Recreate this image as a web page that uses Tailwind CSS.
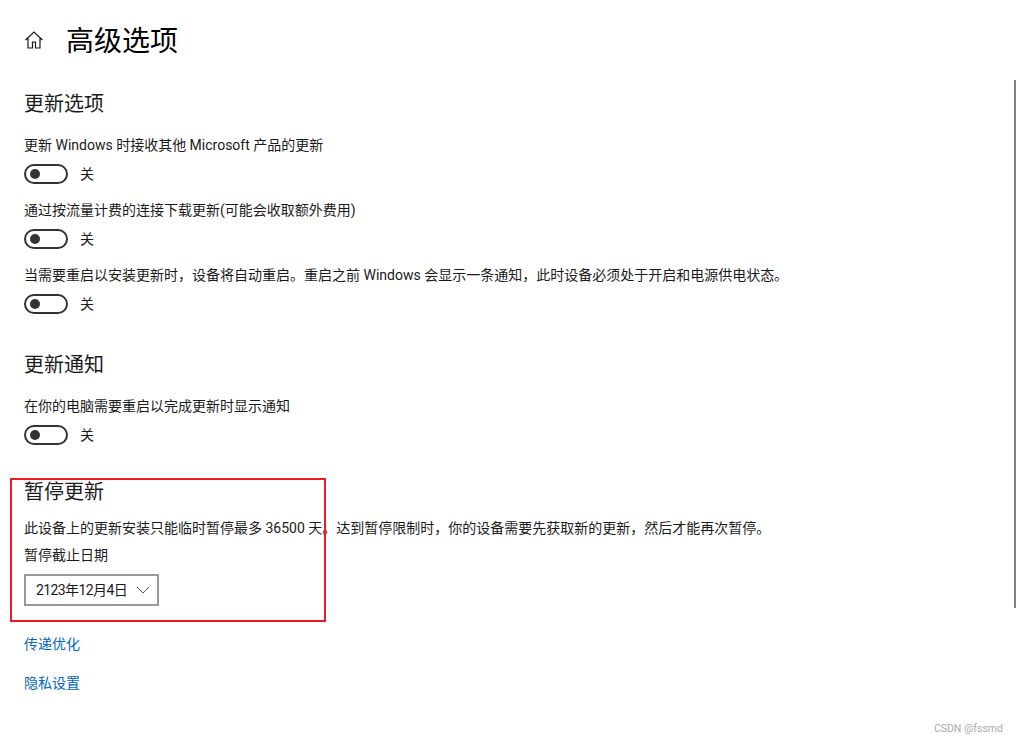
<!DOCTYPE html>
<html lang="zh-CN">
<head>
    <meta charset="UTF-8">
    <title>高级选项</title>
    <script src="https://cdn.jsdelivr.net/npm/@tailwindcss/browser@4"></script>
</head>
<body class="bg-white relative h-[742px] w-[1018px] overflow-hidden text-[14px] text-[#1a1a1a] font-['Roboto','Noto_Sans_CJK_SC',sans-serif]">
    <!-- Header -->
    <div class="flex items-center pl-[24px] pt-[20px] h-[60px]">
        <svg class="w-[20px] h-[20px]" viewBox="0 0 20 20" fill="none" stroke="#1a1a1a" stroke-width="1.2">
            <path d="M1.500 10 10 2l8.500 8M4 8v10h4.500v-6h3v6H16V8"/>
        </svg>
        <h1 class="ml-[22px] pt-[4px] text-[28px] leading-[40px] font-normal text-black">高级选项</h1>
    </div>

    <div class="pl-[24px]">
        <!-- Update options -->
        <h2 class="mt-[30px] text-[20px] leading-[28px] font-normal">更新选项</h2>
        <p class="mt-[17px] leading-[20px]">更新 Windows 时接收其他 Microsoft 产品的更新</p>
        <div class="flex items-center mt-[9px] h-[20px]">
            <span class="flex items-center w-[44px] h-[20px] rounded-full border-2 border-[#333] pl-[4px]"><span class="w-[10px] h-[10px] rounded-full bg-[#333]"></span></span>
            <span class="ml-[12px]">关</span>
        </div>
        <p class="mt-[16px] leading-[20px]">通过按流量计费的连接下载更新(可能会收取额外费用)</p>
        <div class="flex items-center mt-[9px] h-[20px]">
            <span class="flex items-center w-[44px] h-[20px] rounded-full border-2 border-[#333] pl-[4px]"><span class="w-[10px] h-[10px] rounded-full bg-[#333]"></span></span>
            <span class="ml-[12px]">关</span>
        </div>
        <p class="mt-[16px] leading-[20px]">当需要重启以安装更新时，设备将自动重启。重启之前 Windows 会显示一条通知，此时设备必须处于开启和电源供电状态。</p>
        <div class="flex items-center mt-[9px] h-[20px]">
            <span class="flex items-center w-[44px] h-[20px] rounded-full border-2 border-[#333] pl-[4px]"><span class="w-[10px] h-[10px] rounded-full bg-[#333]"></span></span>
            <span class="ml-[12px]">关</span>
        </div>

        <!-- Update notifications -->
        <h2 class="mt-[37px] text-[20px] leading-[28px] font-normal">更新通知</h2>
        <p class="mt-[17px] leading-[20px]">在你的电脑需要重启以完成更新时显示通知</p>
        <div class="flex items-center mt-[9px] h-[20px]">
            <span class="flex items-center w-[44px] h-[20px] rounded-full border-2 border-[#333] pl-[4px]"><span class="w-[10px] h-[10px] rounded-full bg-[#333]"></span></span>
            <span class="ml-[12px]">关</span>
        </div>

        <!-- Pause updates -->
        <h2 class="mt-[33px] text-[20px] leading-[28px] font-normal">暂停更新</h2>
        <p class="mt-[12px] leading-[20px]">此设备上的更新安装只能临时暂停最多 36500 天。达到暂停限制时，你的设备需要先获取新的更新，然后才能再次暂停。</p>
        <p class="mt-[7px] leading-[20px]">暂停截止日期</p>
        <div class="flex items-center mt-[9px] w-[135px] h-[32px] border-2 border-[#999] pl-[10px]">
            <span class="whitespace-nowrap tracking-[-0.6px]">2123年12月4日</span>
            <svg class="ml-[9px] w-[14px] h-[8px] shrink-0" viewBox="0 0 14 8" fill="none" stroke="#555" stroke-width="1">
                <path d="M1 1l6 6 6-6"/>
            </svg>
        </div>

        <!-- Links -->
        <a href="#" class="block mt-[28px] leading-[20px] text-[#0067c0]">传递优化</a>
        <a href="#" class="block mt-[19px] leading-[20px] text-[#0067c0]">隐私设置</a>
    </div>

    <!-- Annotation box -->
    <div class="absolute left-[10px] top-[478px] w-[316px] h-[144px] border-2 border-[#ed1c24]"></div>
    <!-- Scrollbar -->
    <div class="absolute left-[1014px] top-[80px] w-[2px] h-[528px] bg-[#808080]"></div>
    <!-- Watermark -->
    <div class="absolute right-[15px] top-[722px] text-[10.5px] leading-[14px] text-[#aaa]">CSDN @fssmd</div>
</body>
</html>
